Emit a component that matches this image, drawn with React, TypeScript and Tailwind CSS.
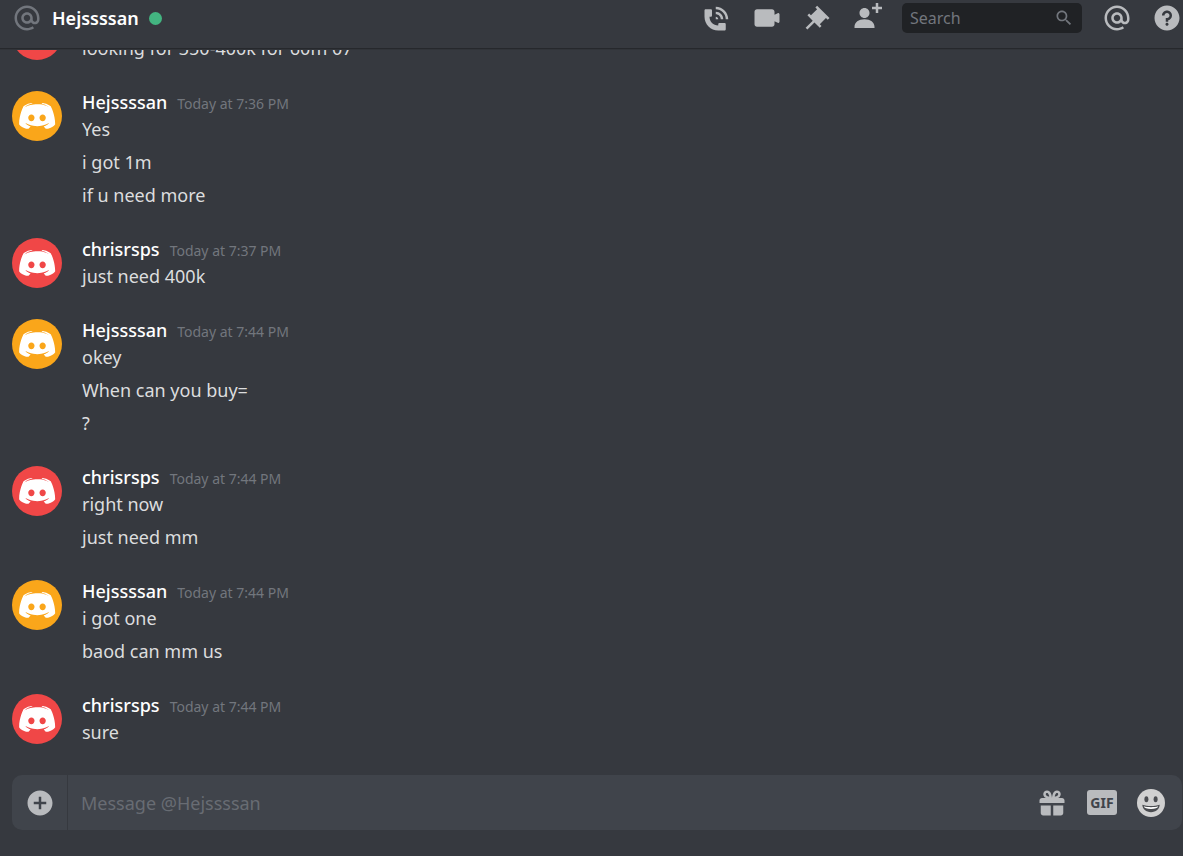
import type { ReactNode } from "react";

type Group = {
  author?: string;
  time?: string;
  color: "red" | "orange";
  lines: string[];
};

const groups: Group[] = [
  { color: "red", lines: ["looking for 350-400k for 60m 07"] },
  { author: "Hejssssan", time: "Today at 7:36 PM", color: "orange", lines: ["Yes", "i got 1m", "if u need more"] },
  { author: "chrisrsps", time: "Today at 7:37 PM", color: "red", lines: ["just need 400k"] },
  { author: "Hejssssan", time: "Today at 7:44 PM", color: "orange", lines: ["okey", "When can you buy=", "?"] },
  { author: "chrisrsps", time: "Today at 7:44 PM", color: "red", lines: ["right now", "just need mm"] },
  { author: "Hejssssan", time: "Today at 7:44 PM", color: "orange", lines: ["i got one", "baod can mm us"] },
  { author: "chrisrsps", time: "Today at 7:44 PM", color: "red", lines: ["sure"] },
];

// ==========================
// Icons (24x24 grid)
// ==========================
const icons = {
  at: "M12 2C6.486 2 2 6.486 2 12C2 17.515 6.486 22 12 22C14.039 22 15.993 21.398 17.652 20.259L16.521 18.611C15.195 19.519 13.633 20 12 20C7.589 20 4 16.411 4 12C4 7.589 7.589 4 12 4C16.411 4 20 7.589 20 12V12.782C20 14.17 19.402 15 18.4 15L18.398 15.018C18.338 15.005 18.273 15 18.209 15H18C17.437 15 16.6 14.182 16.6 13.631V12C16.6 9.464 14.537 7.4 12 7.4C9.463 7.4 7.4 9.463 7.4 12C7.4 14.537 9.463 16.6 12 16.6C13.234 16.6 14.35 16.106 15.177 15.313C15.826 16.269 16.93 17 18 17L18.002 16.981C18.064 16.994 18.129 17 18.195 17H18.4C20.552 17 22 15.306 22 12.782V12C22 6.486 17.514 2 12 2ZM12 14.599C10.566 14.599 9.4 13.433 9.4 11.999C9.4 10.565 10.566 9.399 12 9.399C13.434 9.399 14.6 10.565 14.6 11.999C14.6 13.433 13.434 14.599 12 14.599Z",
  call: "M11 5V3C16.515 3 21 7.486 21 13H19C19 8.589 15.411 5 11 5ZM17 13H15C15 10.795 13.206 9 11 9V7C14.309 7 17 9.691 17 13ZM11 11V13H13C13 11.896 12.105 11 11 11ZM14 16H18C18.553 16 19 16.447 19 17V21C19 21.553 18.553 22 18 22H13C6.925 22 2 17.075 2 11V6C2 5.447 2.448 5 3 5H7C7.553 5 8 5.447 8 6V10C8 10.553 7.553 11 7 11H6C6.063 14.938 9 18 13 18V17C13 16.447 13.447 16 14 16Z",
  video:
    "M21.526 8.149C21.231 7.966 20.862 7.951 20.553 8.105L18 9.382V7C18 5.897 17.103 5 16 5H4C2.897 5 2 5.897 2 7V17C2 18.104 2.897 19 4 19H16C17.103 19 18 18.104 18 17V14.618L20.553 15.894C20.694 15.965 20.847 16 21 16C21.183 16 21.365 15.949 21.526 15.851C21.82 15.668 22 15.347 22 15V9C22 8.653 21.82 8.332 21.526 8.149Z",
  pin: "M22 12L12.101 2.101L10.686 3.514L12.101 4.929L7.151 9.878V9.88L5.736 8.465L4.322 9.88L8.565 14.122L2.908 19.778L4.322 21.192L9.979 15.536L14.222 19.778L15.636 18.364L14.222 16.95L19.171 12H19.172L20.586 13.414L22 12Z",
  invite:
    "M21 3H24V5H21V8H19V5H16V3H19V0H21V3ZM10 12C12.205 12 14 10.205 14 8C14 5.795 12.205 4 10 4C7.795 4 6 5.795 6 8C6 10.205 7.795 12 10 12ZM10 13C5.289 13 2 15.467 2 19V20H18V19C18 15.467 14.711 13 10 13Z",
  help: "M12 2C6.486 2 2 6.487 2 12C2 17.515 6.486 22 12 22C17.514 22 22 17.515 22 12C22 6.487 17.514 2 12 2ZM12 18.25C11.31 18.25 10.75 17.691 10.75 17C10.75 16.31 11.31 15.75 12 15.75C12.69 15.75 13.25 16.31 13.25 17C13.25 17.691 12.69 18.25 12 18.25ZM13 13.875V15H11V12H12C13.104 12 14 11.103 14 10C14 8.896 13.104 8 12 8C10.896 8 10 8.896 10 10H8C8 7.795 9.795 6 12 6C14.205 6 16 7.795 16 10C16 11.861 14.723 13.429 13 13.875Z",
  search:
    "M15.5 14h-.79l-.28-.27C15.41 12.59 16 11.11 16 9.5 16 5.91 13.09 3 9.5 3S3 5.91 3 9.5 5.91 16 9.5 16c1.61 0 3.09-.59 4.23-1.57l.27.28v.79l5 4.99L20.49 19l-4.99-5zm-6 0C7.01 14 5 11.99 5 9.5S7.01 5 9.5 5 14 7.01 14 9.5 11.99 14 9.5 14z",
  add: "M12 2C6.486 2 2 6.486 2 12C2 17.514 6.486 22 12 22C17.514 22 22 17.514 22 12C22 6.486 17.514 2 12 2ZM17 13H13V17H11V13H7V11H11V7H13V11H17V13Z",
  gift: "M16.886 7.999H20C21.104 7.999 22 8.896 22 9.999V11.999H2V9.999C2 8.896 2.897 7.999 4 7.999H7.114C6.663 7.764 6.236 7.477 5.879 7.121C4.709 5.951 4.709 4.048 5.879 2.879C7.012 1.746 8.986 1.746 10.121 2.877C11.758 4.514 11.979 7.595 11.998 7.941L11.991 7.999H12.009L12.002 7.941C12.022 7.595 12.242 4.515 13.879 2.878C15.014 1.745 16.986 1.746 18.121 2.877C19.29 4.049 19.29 5.952 18.121 7.121C17.764 7.477 17.337 7.764 16.886 7.999ZM7.293 5.707C6.903 5.316 6.903 4.682 7.293 4.292C7.481 4.103 7.732 4 8 4C8.268 4 8.519 4.103 8.707 4.292C9.297 4.882 9.641 5.94 9.825 6.822C8.945 6.639 7.879 6.293 7.293 5.707ZM14.174 6.824C14.359 5.941 14.702 4.883 15.293 4.293C15.481 4.103 15.732 4 16 4C16.268 4 16.519 4.103 16.706 4.291C17.096 4.682 17.097 5.316 16.707 5.707C16.116 6.298 15.057 6.642 14.174 6.824ZM3 13.999V19.999C3 21.102 3.897 21.999 5 21.999H11V13.999H3ZM13 13.999V21.999H19C20.104 21.999 21 21.102 21 19.999V13.999H13Z",
};

function Icon({ d, className = "size-[30px]" }: { d: string; className?: string }) {
  return (
    <svg viewBox="0 0 24 24" className={className} fill="currentColor" fillRule="evenodd" aria-hidden="true">
      <path d={d} />
    </svg>
  );
}

function IconButton({ label, children }: { label: string; children: ReactNode }) {
  return (
    <button type="button" aria-label={label} className="shrink-0 text-[#b9bbbe] hover:text-white">
      {children}
    </button>
  );
}

function Avatar({ color }: { color: Group["color"] }) {
  return (
    <div
      className={`mt-[3px] size-[50px] shrink-0 overflow-hidden rounded-full ${
        color === "red" ? "bg-[#f04747]" : "bg-[#faa61a]"
      }`}
    >
      <svg viewBox="41.6 28 162 162" className="size-full" fill="#fff" fillRule="evenodd" aria-hidden="true">
        <path d="M150.9 150.6s-3.6-4.3-6.6-8.1c13.1-3.7 18.1-11.9 18.1-11.9-4.1 2.7-8 4.6-11.5 5.9-5 2.1-9.8 3.5-14.5 4.3-9.6 1.8-18.4 1.3-25.9-.1-5.7-1.1-10.6-2.7-14.7-4.3-2.3-.9-4.8-2-7.3-3.4-.3-.2-.6-.3-.9-.5-.2-.1-.3-.2-.4-.3-1.8-1-2.8-1.7-2.8-1.7s4.8 8 17.5 11.8c-3 3.8-6.7 8.3-6.7 8.3-22.1-.7-30.5-15.2-30.5-15.2 0-32.2 14.4-58.3 14.4-58.3 14.4-10.8 28.1-10.5 28.1-10.5l1 1.2c-18 5.2-26.3 13.1-26.3 13.1s2.2-1.2 5.9-2.9c10.7-4.7 19.2-6 22.7-6.3.6-.1 1.1-.2 1.7-.2 6.1-.8 13-1 20.2-.2 9.5 1.1 19.7 3.9 30.1 9.6 0 0-7.9-7.5-24.9-12.7l1.4-1.6s13.7-.3 28.1 10.5c0 0 14.4 26.1 14.4 58.3 0 0-8.5 14.5-30.6 15.2zM104.4 103.9c-5.7 0-10.2 5-10.2 11.1s4.6 11.1 10.2 11.1c5.7 0 10.2-5 10.2-11.1.1-6.1-4.5-11.1-10.2-11.1zM140.9 103.9c-5.7 0-10.2 5-10.2 11.1s4.6 11.1 10.2 11.1c5.7 0 10.2-5 10.2-11.1s-4.5-11.1-10.2-11.1z" />
      </svg>
    </div>
  );
}

function Emoji() {
  return (
    <svg viewBox="0 0 28 28" className="size-7" aria-hidden="true">
      <circle cx="14" cy="14" r="14" fill="#d0d0d0" />
      <ellipse cx="9.4" cy="10.2" rx="2" ry="3" fill="#4a4c50" />
      <ellipse cx="18.6" cy="10.2" rx="2" ry="3" fill="#4a4c50" />
      <path d="M5.3 15.8c2.6.9 5.6 1.2 8.7 1.2s6.1-.3 8.7-1.2c-.2 4.3-3.8 7.4-8.7 7.4s-8.5-3.1-8.7-7.4z" fill="#4a4c50" />
      <path d="M6.7 17.3c2.2.7 4.7.9 7.3.9s5.1-.2 7.3-.9c-.5 1.8-3.3 2.7-7.3 2.7s-6.8-.9-7.3-2.7z" fill="#fff" />
    </svg>
  );
}

export default function App() {
  return (
    <div className="flex h-screen flex-col overflow-hidden bg-[#36393f] font-['Noto_Sans',sans-serif] text-[#dcddde]">
      {/* Header */}
      <header className="z-10 flex h-12 shrink-0 items-center justify-between bg-[#36393f] pr-px pb-3 pl-3 shadow-[0_1px_0_#26282c,0_2px_0_#313439]">
        <div className="flex items-center">
          <Icon d={icons.at} className="size-[30px] text-[#72767d]" />
          <h1 className="ml-[10px] text-lg font-semibold text-white">Hejssssan</h1>
          <span className="ml-[10px] size-[13px] rounded-full bg-[#43b581]" />
        </div>

        <div className="flex items-center gap-5">
          <IconButton label="Start Voice Call"><Icon d={icons.call} /></IconButton>
          <IconButton label="Start Video Call"><Icon d={icons.video} /></IconButton>
          <IconButton label="Pinned Messages"><Icon d={icons.pin} /></IconButton>
          <IconButton label="Add Friends to DM"><Icon d={icons.invite} /></IconButton>
          <label className="flex h-[30px] w-[180px] items-center rounded-[5px] bg-[#202225] px-2 text-[#72767d]">
            <input
              type="text"
              aria-label="Search"
              placeholder="Search"
              className="min-w-0 flex-1 bg-transparent text-base text-[#dcddde] outline-none placeholder:text-[#72767d]"
            />
            <Icon d={icons.search} className="size-5" />
          </label>
          <IconButton label="Mentions"><Icon d={icons.at} /></IconButton>
          <IconButton label="Help"><Icon d={icons.help} /></IconButton>
        </div>
      </header>

      {/* Messages */}
      <main className="flex min-h-0 flex-1 flex-col justify-end gap-[26px] overflow-hidden px-3 pb-[29px]">
        {groups.map((g, i) => (
          <article key={i} className="flex shrink-0 gap-5">
            <Avatar color={g.color} />
            <div>
              <div className="flex h-7 items-baseline gap-[10px]">
                {g.author && <h2 className="text-lg leading-7 font-medium text-white">{g.author}</h2>}
                {g.time && <time className="text-sm leading-7 text-[#72767d]">{g.time}</time>}
              </div>
              <div className="flex flex-col gap-[6px]">
                {g.lines.map((line) => (
                  <p key={line} className="text-lg leading-[27px]">{line}</p>
                ))}
              </div>
            </div>
          </article>
        ))}
      </main>

      {/* Message box */}
      <form className="mr-px mb-[26px] ml-3 flex h-[55px] shrink-0 items-center rounded-[10px] bg-[#40444b]">
        <div className="flex h-full w-14 items-center justify-center border-r border-[#36393f]">
          <IconButton label="Upload a file"><Icon d={icons.add} /></IconButton>
        </div>
        <input
          type="text"
          aria-label="Message @Hejssssan"
          placeholder="Message @Hejssssan"
          className="h-full min-w-0 flex-1 bg-transparent px-[13px] text-lg outline-none placeholder:text-[#686c73]"
        />
        <div className="flex items-center gap-5 pr-[17px]">
          <IconButton label="Send a gift"><Icon d={icons.gift} /></IconButton>
          <IconButton label="Open GIF picker">
            <span className="flex h-[25px] w-[30px] items-center justify-center rounded-[3px] bg-[#b9bbbe] text-sm font-bold text-[#40444b]">
              GIF
            </span>
          </IconButton>
          <IconButton label="Select emoji"><Emoji /></IconButton>
        </div>
      </form>
    </div>
  );
}
